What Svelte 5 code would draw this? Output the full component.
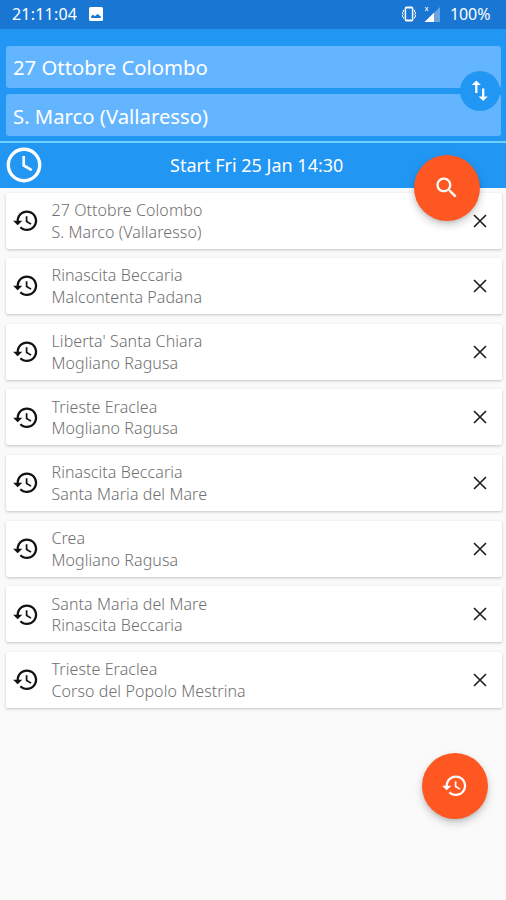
<script>
  const trips = [
    { from: '27 Ottobre Colombo', to: 'S. Marco (Vallaresso)' },
    { from: 'Rinascita Beccaria', to: 'Malcontenta Padana' },
    { from: "Liberta' Santa Chiara", to: 'Mogliano Ragusa' },
    { from: 'Trieste Eraclea', to: 'Mogliano Ragusa' },
    { from: 'Rinascita Beccaria', to: 'Santa Maria del Mare' },
    { from: 'Crea', to: 'Mogliano Ragusa' },
    { from: 'Santa Maria del Mare', to: 'Rinascita Beccaria' },
    { from: 'Trieste Eraclea', to: 'Corso del Popolo Mestrina' }
  ];
</script>

{#snippet history()}
  <svg class="icon" viewBox="0 0 24 24" aria-hidden="true">
    <path d="M13 3c-4.97 0-9 4.03-9 9H1l3.89 3.89.07.14L9 12H6c0-3.87 3.13-7 7-7s7 3.13 7 7-3.13 7-7 7c-1.93 0-3.68-.79-4.94-2.06l-1.42 1.42C8.27 19.99 10.51 21 13 21c4.97 0 9-4.03 9-9s-4.03-9-9-9zm-1 5v5l4.28 2.54.72-1.21-3.5-2.08V8H12z" />
  </svg>
{/snippet}

<div class="screen">
  <div class="status">
    <span class="time">21:11:04</span>
    <svg class="photo" viewBox="0 0 14 14" aria-hidden="true">
      <rect width="14" height="14" rx="1.5" fill="#fff" />
      <path d="M2.2 11V9.3L4 7.8l1.8 1.5L8.6 7l3.2 2.6V11z" fill="#1976d2" />
    </svg>
    <span class="grow"></span>
    <svg class="vibrate" viewBox="0 0 16 16" aria-hidden="true">
      <rect x="4.4" y="1.2" width="7.2" height="13.6" rx="1" fill="none" stroke="#fff" stroke-width="1.5" />
      <path d="M4.5 1.8h7M4.5 14.2h7" stroke="#fff" stroke-width="1.6" />
      <path d="M2.4 3.8v2.2l-1.4 1 1.4 1.5-1.4 1.5 1.4 1v1.4M13.6 3.8v2.2l1.4 1-1.4 1.5 1.4 1.5-1.4 1v1.4" fill="none" stroke="#fff" stroke-width="1" />
    </svg>
    <svg class="signal" viewBox="0 0 16 16" aria-hidden="true">
      <path d="M16 1v15H.5z" fill="#fff" opacity=".35" />
      <path d="M10 6.8V16H.5z" fill="#fff" />
      <path d="M1.2 1l3 4M4.2 1l-3 4" stroke="#fff" stroke-width="1.2" opacity=".8" />
    </svg>
    <span class="battery">100%</span>
  </div>

  <div class="search">
    <div class="field"><span class="origin">27 Ottobre Colombo</span></div>
    <div class="field"><span class="destination">S. Marco (Vallaresso)</span></div>
    <button class="swap" aria-label="Swap">
      <svg class="icon" viewBox="0 0 24 24"><path d="M16 17.01V10h-2v7.01h-3L15 21l4-3.99h-3zM9 3L5 6.99h3V14h2V6.99h3L9 3z" /></svg>
    </button>
  </div>

  <div class="when">
    <svg class="clock" viewBox="0 0 36 36" aria-hidden="true">
      <circle cx="18" cy="18" r="15.7" fill="none" stroke="#fff" stroke-width="3.4" />
      <path d="M17.7 9v9.5l8 4.7" fill="none" stroke="#fff" stroke-width="2.7" />
    </svg>
    <span class="start">Start Fri 25 Jan 14:30</span>
    <button class="fab find" aria-label="Search">
      <svg class="icon" viewBox="0 0 24 24"><path d="M15.5 14h-.79l-.28-.27C15.41 12.59 16 11.11 16 9.5 16 5.91 13.09 3 9.5 3S3 5.91 3 9.5 5.91 16 9.5 16c1.61 0 3.09-.59 4.23-1.57l.27.28v.79l5 4.99L20.49 19l-4.99-5zm-6 0C7.01 14 5 11.99 5 9.5S7.01 5 9.5 5 14 7.01 14 9.5 11.99 14 9.5 14z" /></svg>
    </button>
  </div>

  <div class="list">
    {#each trips as trip}
      <div class="card">
        {@render history()}
        <div class="names">
          <div>{trip.from}</div>
          <div>{trip.to}</div>
        </div>
        <svg class="close" viewBox="0 0 14 14" aria-hidden="true"><path d="M1 1l12 12M13 1L1 13" /></svg>
      </div>
    {/each}
  </div>

  <button class="fab recent" aria-label="History">{@render history()}</button>
</div>

<style>
  :global(body) { margin: 0; }
  .screen {
    position: relative;
    box-sizing: border-box;
    width: 506px;
    height: 900px;
    overflow: hidden;
    background: #fafafa;
    font-family: "Noto Sans", "Open Sans", sans-serif;
  }
  button { border: 0; padding: 0; color: #fff; }
  .icon { display: block; flex: none; width: 27.5px; height: 27.5px; fill: currentColor; }
  .status {
    display: flex;
    align-items: center;
    box-sizing: border-box;
    height: 28.5px;
    padding: 0 15px 0 12px;
    background: #1976d2;
    color: #fff;
    font-size: 16px;
  }
  .time { width: 66px; letter-spacing: 0.2px; }
  .photo { width: 14px; height: 14px; margin-left: 11px; }
  .grow { flex: 1; }
  .vibrate { width: 16px; height: 16px; }
  .signal { width: 16px; height: 16px; margin: 0 10px 0 7px; }
  .battery { width: 41px; letter-spacing: -0.1px; }
  .search {
    position: relative;
    display: flex;
    flex-direction: column;
    gap: 5.5px;
    box-sizing: border-box;
    height: 112.5px;
    padding: 17.5px 5px 0 6px;
    background: #2196f3;
  }
  .field {
    display: flex;
    align-items: center;
    height: 42px;
    padding: 0 7px;
    border-radius: 3px;
    background: #64b5ff;
    color: #fff;
    font-size: 20.3px;
    white-space: nowrap;
  }
  .destination { padding-top: 2px; }
  .swap {
    position: absolute;
    right: 6px;
    top: 42px;
    display: grid;
    place-items: center;
    width: 40px;
    height: 40px;
    border-radius: 50%;
    background: #2196f3;
  }
  .when {
    position: relative;
    z-index: 1;
    display: flex;
    align-items: center;
    box-sizing: border-box;
    height: 47px;
    padding: 0 6px 2px 5.5px;
    border-top: 2px solid #6dd0fd;
    background: #2196f3;
    color: #fff;
  }
  .clock { width: 36px; height: 36px; }
  .start { flex: 1; padding-right: 28px; text-align: center; font-size: 18px; }
  .fab {
    position: absolute;
    display: grid;
    place-items: center;
    width: 66px;
    height: 66px;
    border-radius: 50%;
    background: #ff5722;
    box-shadow: 0 4px 8px rgba(0, 0, 0, .2), 0 2px 3px rgba(0, 0, 0, .08);
  }
  .find { right: 26.5px; top: 11.5px; }
  .recent { right: 18px; top: 752.5px; }
  .list { display: flex; flex-direction: column; gap: 9.65px; padding: 4.5px 4.5px 0 5.5px; }
  .card {
    display: flex;
    align-items: center;
    box-sizing: border-box;
    height: 56px;
    padding: 0 15px 0 6px;
    border-radius: 2px;
    background: #fff;
    color: #111;
    box-shadow: 0 1px 3px rgba(0, 0, 0, .22);
  }
  .names {
    flex: 1;
    margin-left: 12.5px;
    padding-top: 2px;
    color: #707070;
    font-size: 16px;
    font-weight: 300;
    letter-spacing: 0.08px;
    line-height: 21.8px;
    white-space: nowrap;
  }
  .close { width: 14px; height: 14px; fill: none; stroke: #222; stroke-width: 1.7; }
</style>
